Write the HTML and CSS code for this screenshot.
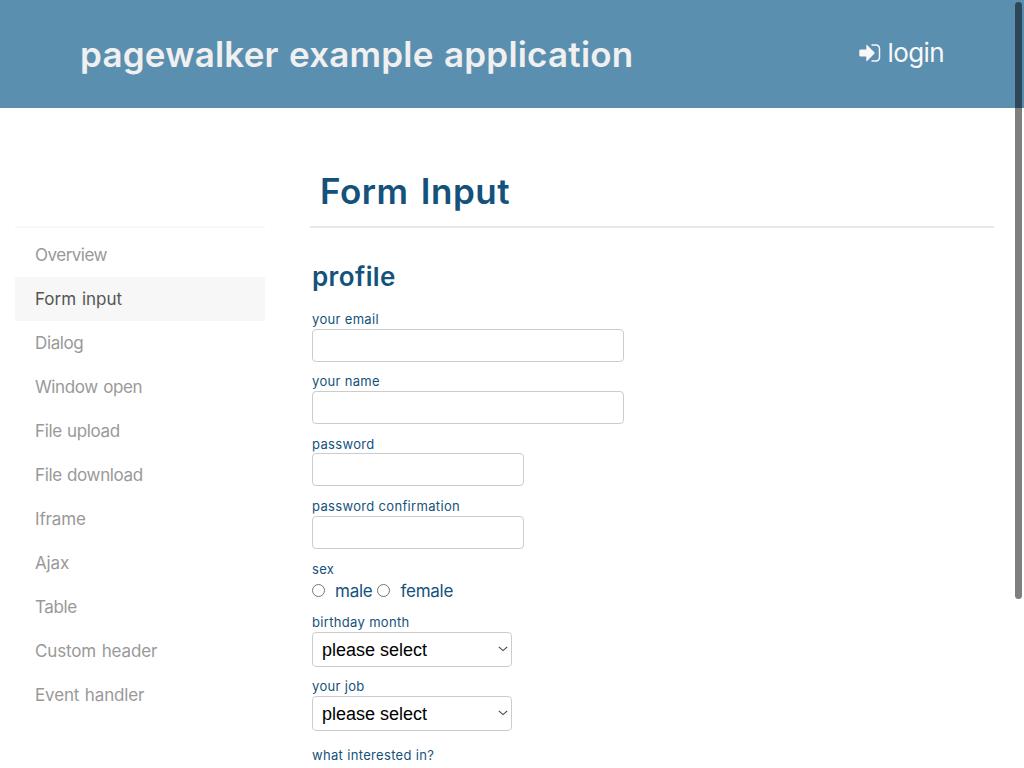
FILE: index.html
```html
<!DOCTYPE html>
<html lang="en">
<head>
<meta charset="utf-8">
<title>pagewalker example application</title>
<link rel="stylesheet" href="styles.css">
</head>
<body>
<header class="header">
  <div class="brand">pagewalker example application</div>
  <a class="login"><svg class="login-icon" viewBox="0 0 22 18"><path d="M1.5 5.5H7.3V1.2Q7.3 .2 8.1 1L15.3 8.3Q16 9 15.3 9.7L8.1 17Q7.3 17.8 7.3 16.8V12.5H1.5Q.3 12.5.3 11.3V6.7Q.3 5.5 1.5 5.5Z" fill="currentColor"/><path d="M12.5 1H16.5Q20.5 1 20.5 5V13Q20.5 17 16.5 17H12.5" fill="none" stroke="currentColor" stroke-width="1.5"/></svg><span>login</span></a>
</header>
<div class="layout">
  <nav class="sidebar">
    <a class="nav-item tight">Overview</a>
    <a class="nav-item active">Form input</a>
    <a class="nav-item">Dialog</a>
    <a class="nav-item">Window open</a>
    <a class="nav-item">File upload</a>
    <a class="nav-item">File download</a>
    <a class="nav-item loose">Iframe</a>
    <a class="nav-item loose">Ajax</a>
    <a class="nav-item">Table</a>
    <a class="nav-item loose">Custom header</a>
    <a class="nav-item loose">Event handler</a>
  </nav>
  <main class="content">
    <h1 class="page-title">Form Input</h1>
    <form class="form">
      <h2 class="section-title">profile</h2>
      <div class="field"><label class="label">your email</label><input class="input wide" type="text"></div>
      <div class="field"><label class="label">your name</label><input class="input wide" type="text"></div>
      <div class="field"><label class="label">password</label><input class="input" type="password"></div>
      <div class="field"><label class="label">password confirmation</label><input class="input" type="password"></div>
      <div class="field sex"><label class="label">sex</label>
        <div class="options"><input class="radio" type="radio" name="sex"><span class="option male">male</span><input class="radio" type="radio" name="sex"><span class="option">female</span></div>
      </div>
      <div class="field select-field"><label class="label">birthday month</label><div class="select-box"><select class="select"><option>please select</option></select><svg class="chevron" viewBox="0 0 10 6"><path d="M.8 .8L5 4.6L9.2 .8" fill="none" stroke="#444" stroke-width="1.1"/></svg></div></div>
      <div class="field job"><label class="label">your job</label><div class="select-box"><select class="select"><option>please select</option></select><svg class="chevron" viewBox="0 0 10 6"><path d="M.8 .8L5 4.6L9.2 .8" fill="none" stroke="#444" stroke-width="1.1"/></svg></div></div>
      <label class="label">what interested in?</label>
    </form>
  </main>
</div>
<div class="scrollbar"></div>
</body>
</html>
```
FILE: styles.css
```css
* { box-sizing: border-box; }
body { margin: 0; height: 768px; overflow: hidden; background: #fff; font-family: Inter, "Liberation Sans", sans-serif; color: #14527c; }
.header { height: 108px; padding: 0 80px; display: flex; align-items: center; justify-content: space-between; background: #5b8fb0; color: #f0f0f0; }
.brand { font-size: 35px; line-height: 44px; font-weight: 600; letter-spacing: .2px; word-spacing: 1.4px; white-space: nowrap; }
.login { display: flex; align-items: center; gap: 7px; padding-bottom: 2px; color: #f8f8f8; font-size: 26px; line-height: 32px; letter-spacing: -.6px; }
.login-icon { width: 22px; height: 18px; }
.layout { display: flex; }
.sidebar { width: 250px; margin: 118px 0 0 15px; padding-top: 5px; border-top: 2px solid #f7f7f7; }
.nav-item { display: block; height: 44px; line-height: 44px; padding-left: 20px; font-size: 17px; letter-spacing: -.38px; word-spacing: 1px; color: #999; }
.nav-item.tight { letter-spacing: -.5px; }
.nav-item.loose { letter-spacing: -.15px; }
.nav-item.active { background: #f7f7f7; color: #555; letter-spacing: 0; }
.content { width: 684px; margin-left: 45px; }
.page-title { height: 120px; margin: 0; padding: 61px 10px 0; border-bottom: 2px solid #e8e8e8; font-size: 35px; line-height: 44px; font-weight: 600; letter-spacing: .5px; word-spacing: 3px; }
.form { padding: 31px 2px 0; }
.section-title { margin: 0 0 15px; font-size: 26px; line-height: 36px; font-weight: 600; letter-spacing: .4px; }
.field { height: 62.4px; }
.label { display: block; height: 18px; font-size: 13px; line-height: 18px; letter-spacing: .33px; }
.input { display: block; width: 212px; height: 33px; margin: .6px 0 0; border: 1px solid #ccc; border-radius: 4px; background: #fff; }
.input.wide { width: 312px; }
.field.sex { height: 53.4px; }
.options { display: flex; align-items: center; height: 26px; font-size: 17px; letter-spacing: -.25px; }
.radio { width: 13px; height: 13px; margin: 0 10px 1px 0; }
.male { margin-right: 5px; }
.select-field { height: 64px; }
.select-box { position: relative; width: 200px; padding-top: 1px; }
.select { display: block; width: 200px; height: 35px; margin: 0; padding: 1px 0 0 9px; border: 1px solid #ccc; border-radius: 4px; background: #fff; color: #000; font: 18px "Liberation Sans", sans-serif; appearance: none; }
.chevron { position: absolute; right: 4px; top: 15px; width: 10px; height: 6px; }
.field.job { height: 69px; }
.scrollbar { position: absolute; top: 2px; left: 1015px; width: 7px; height: 597px; border-radius: 4px; background: rgba(0, 0, 0, .5); }
```
